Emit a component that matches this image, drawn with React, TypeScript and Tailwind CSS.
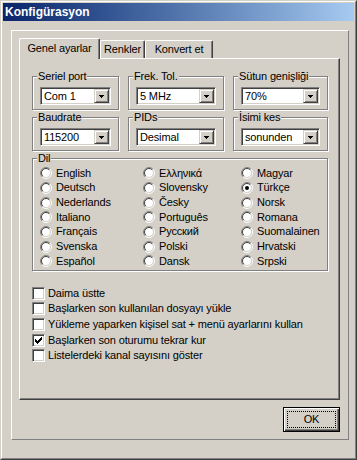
import React from "react";

function Arrow() {
  return (
    <svg width="5" height="3" viewBox="0 0 5 3" shapeRendering="crispEdges">
      <path d="M0 0h5v1H0z M1 1h3v1H1z M2 2h1v1H2z" fill="#000" />
    </svg>
  );
}

function Combo({ value }: { value: string }) {
  return (
    <div className="h-[18px] flex bg-white border border-t-[#808080] border-l-[#808080] border-r-white border-b-white shadow-[inset_1px_1px_#404040,inset_-1px_-1px_#d4d0c8] p-[1px]">
      <div className="flex-1 flex items-center pl-[2px] text-[11px] leading-none whitespace-nowrap">{value}</div>
      <div className="w-[15px] h-full flex items-center justify-center bg-[#d4d0c8] border border-t-[#d4d0c8] border-l-[#d4d0c8] border-r-[#404040] border-b-[#404040] shadow-[inset_1px_1px_#fff,inset_-1px_-1px_#808080]">
        <Arrow />
      </div>
    </div>
  );
}

function Group({ title, width, height, children, className = "" }: { title: string; width: string; height: string; children: React.ReactNode; className?: string }) {
  return (
    <div className={`relative border border-[#808080] shadow-[inset_1px_1px_#fff,1px_1px_#fff] ${width} ${height} ${className}`}>
      <div className="absolute left-[4px] top-[-7px] px-[1px] bg-[#d4d0c8] leading-[13px] text-[11px] whitespace-nowrap">{title}</div>
      {children}
    </div>
  );
}

function Radio({ label, checked = false }: { label: string; checked?: boolean }) {
  return (
    <div className="h-[14.67px] flex items-center gap-[4px] whitespace-nowrap">
      <svg width="12" height="12" viewBox="0 0 12 12" className="shrink-0">
        <circle cx="6" cy="6" r="4.5" fill="#fff" />
        <path d="M2.111 9.889 A5.5 5.5 0 0 1 9.889 2.111" fill="none" stroke="#808080" strokeWidth="1" />
        <path d="M9.889 2.111 A5.5 5.5 0 0 1 2.111 9.889" fill="none" stroke="#ffffff" strokeWidth="1" />
        <path d="M2.818 9.182 A4.5 4.5 0 0 1 9.182 2.818" fill="none" stroke="#404040" strokeWidth="1" />
        <path d="M9.182 2.818 A4.5 4.5 0 0 1 2.818 9.182" fill="none" stroke="#d4d0c8" strokeWidth="1" />
        {checked && <circle cx="6" cy="6" r="2" fill="#000" />}
      </svg>
      <span className="text-[11px] leading-none">{label}</span>
    </div>
  );
}

function Check({ label, checked = false, h }: { label: string; checked?: boolean; h: string }) {
  return (
    <div className={`${h} flex items-center gap-[3px] whitespace-nowrap`}>
      <div className="w-[13px] h-[13px] shrink-0 bg-white border border-t-[#808080] border-l-[#808080] border-r-white border-b-white shadow-[inset_1px_1px_#404040,inset_-1px_-1px_#d4d0c8] flex items-center justify-center">
        {checked && (
          <svg width="7" height="7" viewBox="0 0 7 7" shapeRendering="crispEdges">
            <path d="M6 0h1v1H6z M5 1h2v1H5z M0 2h1v1H0z M4 2h3v1H4z M0 3h2v1H0z M3 3h3v1H3z M0 4h5v1H0z M1 5h3v1H1z M2 6h1v1H2z" fill="#000" />
          </svg>
        )}
      </div>
      <span className="text-[11px] leading-none">{label}</span>
    </div>
  );
}

const col1 = ["English", "Deutsch", "Nederlands", "Italiano", "Français", "Svenska", "Español"];
const col2 = ["Ελληνικά", "Slovensky", "Česky", "Português", "Русский", "Polski", "Dansk"];
const col3 = ["Magyar", "Türkçe", "Norsk", "Romana", "Suomalainen", "Hrvatski", "Srpski"];

export default function App() {
  return (
    <div className="w-[357px] h-[460px] bg-[#d4d0c8] border border-t-[#d4d0c8] border-l-[#d4d0c8] border-r-[#404040] border-b-[#404040] [font-family:'Liberation_Sans',Arial,sans-serif] text-[11px] text-black">
      <div className="w-full h-full border border-t-white border-l-white border-r-[#808080] border-b-[#808080] p-[1px]">
        <div className="h-[18px] bg-linear-to-r from-[#0a246a] to-[#a6caf0] flex items-center pl-[2px] text-white font-bold text-[12px] leading-none">
          Konfigürasyon
        </div>
        <div className="ml-[8px] mt-[9px] w-[338px] h-[410px] border border-t-white border-l-white border-r-[#808080] border-b-[#808080] pl-[7px] pt-[7px] tracking-[-0.15px]">
          {/* tabs */}
          <div className="flex items-end h-[20px]">
            <div className="relative z-10 w-[81px] h-[21px] mb-[-1px] bg-[#d4d0c8] border-l border-t border-r border-l-white border-t-white border-r-[#404040] shadow-[inset_-1px_0_#808080] rounded-tl-[2px] rounded-tr-[2px] flex items-center justify-center pb-[2px] text-[11px] leading-none">
              Genel ayarlar
            </div>
            <div className="w-[45px] h-[18px] bg-[#d4d0c8] border-l border-t border-r border-l-white border-t-white border-r-[#404040] shadow-[inset_-1px_0_#808080] rounded-tl-[2px] rounded-tr-[2px] flex items-center justify-center text-[11px] leading-none">
              Renkler
            </div>
            <div className="w-[68px] h-[18px] bg-[#d4d0c8] border-l border-t border-r border-l-white border-t-white border-r-[#404040] shadow-[inset_-1px_0_#808080] rounded-tl-[2px] rounded-tr-[2px] flex items-center justify-center text-[11px] leading-none whitespace-nowrap">
              Konvert et
            </div>
          </div>
          {/* page */}
          <div className="w-[321px] h-[342px] bg-[#d4d0c8] border border-t-white border-l-white border-r-[#404040] border-b-[#404040] shadow-[inset_-1px_-1px_#808080] pl-[12px] pt-[17px]">
            <div className="flex gap-[9px]">
              <Group title="Seriel port" width="w-[87px]" height="h-[34px]">
                <div className="px-[7px] pt-[10px]"><Combo value="Com 1" /></div>
              </Group>
              <Group title="Frek. Tol." width="w-[96px]" height="h-[34px]">
                <div className="px-[7px] pt-[10px]"><Combo value="5 MHz" /></div>
              </Group>
              <Group title="Sütun genişliği" width="w-[95px]" height="h-[34px]">
                <div className="px-[7px] pt-[10px]"><Combo value="70%" /></div>
              </Group>
            </div>
            <div className="flex gap-[9px] mt-[7px]">
              <Group title="Baudrate" width="w-[87px]" height="h-[34px]">
                <div className="px-[7px] pt-[10px]"><Combo value="115200" /></div>
              </Group>
              <Group title="PIDs" width="w-[96px]" height="h-[34px]">
                <div className="px-[7px] pt-[10px]"><Combo value="Desimal" /></div>
              </Group>
              <Group title="İsimi kes" width="w-[95px]" height="h-[34px]">
                <div className="px-[7px] pt-[10px]"><Combo value="sonunden" /></div>
              </Group>
            </div>
            <Group title="Dil" width="w-[296px]" height="h-[113px]" className="mt-[7px]">
              <div className="flex pl-[7px] pt-[7px]">
                <div className="w-[103px] flex flex-col">
                  {col1.map((l) => <Radio key={l} label={l} />)}
                </div>
                <div className="w-[98px] flex flex-col">
                  {col2.map((l) => <Radio key={l} label={l} />)}
                </div>
                <div className="flex flex-col">
                  {col3.map((l) => <Radio key={l} label={l} checked={l === "Türkçe"} />)}
                </div>
              </div>
            </Group>
            <div className="mt-[15px] flex flex-col">
              <Check h="h-[15px]" label="Daima üstte" />
              <Check h="h-[15px]" label="Başlarken son kullanılan dosyayı yükle" />
              <Check h="h-[16px]" label="Yükleme yaparken kişisel sat + menü ayarlarını kullan" />
              <Check h="h-[16px]" label="Başlarken son oturumu tekrar kur" checked />
              <Check h="h-[15px]" label="Listelerdeki kanal sayısını göster" />
            </div>
          </div>
          {/* button row */}
          <div className="w-[321px] flex justify-end mt-[7px]">
            <div className="w-[57px] h-[25px] border border-black bg-[#d4d0c8] shadow-[inset_1px_1px_#fff,inset_-1px_-1px_#404040,inset_-2px_-2px_#808080] p-[3px]">
              <div className="w-full h-full border border-dotted border-black flex items-center justify-center text-[11px] leading-none">
                OK
              </div>
            </div>
          </div>
        </div>
      </div>
    </div>
  );
}
